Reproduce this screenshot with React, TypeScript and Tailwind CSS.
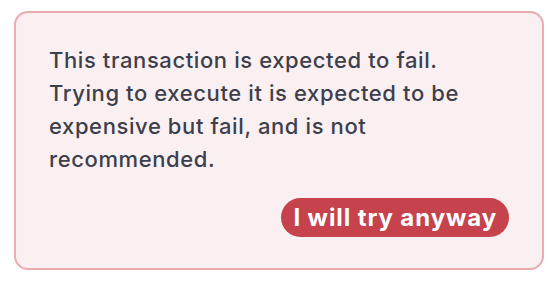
export default function App() {
  return (
    <div className="w-[558px] h-[284px] bg-white pt-[11px] pl-[14px]" style={{ fontFamily: 'Inter, "Noto Sans", sans-serif' }}>
      <div className="w-[530px] h-[259px] rounded-[14px] border-2 border-[#e9acaf] bg-[#fbf0f1] pt-[31px] pl-[33px] pr-[29px] flex flex-col">
        <p className="text-[22px] leading-[33px] tracking-[0.6px] font-medium text-[#3d404c] whitespace-nowrap">
          This transaction is expected to fail.
          <br />
          Trying to execute it is expected to be
          <br />
          expensive but fail, and is not
          <br />
          recommended.
        </p>
        <div className="flex justify-end mt-[22px] pr-[4px]">
          <button className="h-[39px] px-[12px] rounded-full bg-[#c6434d] text-white text-[24px] font-bold tracking-[0.9px] leading-none">
            I will try anyway
          </button>
        </div>
      </div>
    </div>
  )
}
